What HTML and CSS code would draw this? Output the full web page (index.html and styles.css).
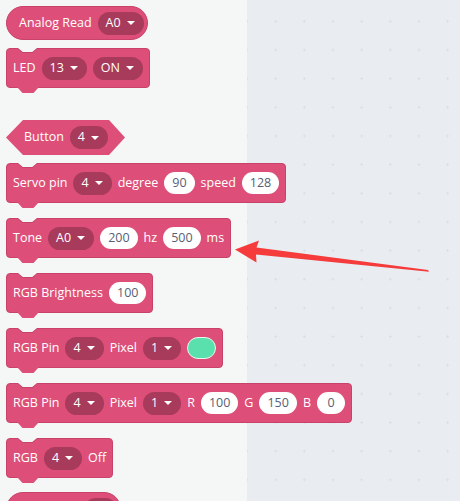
FILE: index.html
```html
<!DOCTYPE html>
<html>
<head>
<meta charset="utf-8">
<link rel="stylesheet" href="styles.css">
</head>
<body>
<div class="app">
  <aside class="flyout">
    <div class="block reporter first">
      <span class="label">Analog Read</span>
      <span class="dd">A0<i class="caret"></i></span>
    </div>
    <div class="block cmd after-reporter">
      <span class="label">LED</span>
      <span class="dd">13<i class="caret"></i></span>
      <span class="dd">ON<i class="caret"></i></span>
    </div>
    <div class="block bool">
      <span class="label">Button</span>
      <span class="dd">4<i class="caret"></i></span>
    </div>
    <div class="block cmd after-bool">
      <span class="label">Servo pin</span>
      <span class="dd">4<i class="caret"></i></span>
      <span class="label">degree</span>
      <span class="num">90</span>
      <span class="label">speed</span>
      <span class="num">128</span>
    </div>
    <div class="block cmd">
      <span class="label">Tone</span>
      <span class="dd">A0<i class="caret"></i></span>
      <span class="num">200</span>
      <span class="label">hz</span>
      <span class="num">500</span>
      <span class="label">ms</span>
    </div>
    <div class="block cmd">
      <span class="label">RGB Brightness</span>
      <span class="num">100</span>
    </div>
    <div class="block cmd">
      <span class="label">RGB Pin</span>
      <span class="dd">4<i class="caret"></i></span>
      <span class="label">Pixel</span>
      <span class="dd">1<i class="caret"></i></span>
      <span class="swatch"></span>
    </div>
    <div class="block cmd">
      <span class="label">RGB Pin</span>
      <span class="dd">4<i class="caret"></i></span>
      <span class="label">Pixel</span>
      <span class="dd">1<i class="caret"></i></span>
      <span class="label">R</span>
      <span class="num">100</span>
      <span class="label">G</span>
      <span class="num">150</span>
      <span class="label">B</span>
      <span class="num">0</span>
    </div>
    <div class="block cmd">
      <span class="label">RGB</span>
      <span class="dd">4<i class="caret"></i></span>
      <span class="label">Off</span>
    </div>
    <div class="block reporter after-cmd">
      <span class="spacer"></span>
      <span class="dd-empty"></span>
    </div>
  </aside>
  <main class="workspace"></main>
  <svg class="arrow" width="460" height="501" viewBox="0 0 460 501">
    <polygon points="235,249.5 259,240.5 256.5,247.5 428,270 429,271.8 256,254.5 256.5,262.5" fill="#f53b3b"/>
  </svg>
</div>
</body>
</html>
```

FILE: styles.css
```css
html, body {
  margin: 0;
  padding: 0;
}
body {
  width: 460px;
  height: 501px;
  overflow: hidden;
  font-family: "Open Sans", "Liberation Sans", Arial, sans-serif;
  font-size: 12.5px;
}
.app {
  position: relative;
  display: flex;
  width: 460px;
  height: 501px;
  overflow: hidden;
}
.flyout {
  width: 247px;
  flex: none;
  background: #f5f6f6;
  display: flex;
  flex-direction: column;
  align-items: flex-start;
  padding-left: 6px;
  box-sizing: border-box;
}
.workspace {
  flex: 1;
  background-color: #e9edf1;
  background-image: radial-gradient(circle, #d9dde3 0.9px, transparent 1.3px);
  background-size: 28.67px 28.67px;
  background-position: -14.3px 7px;
}
.arrow {
  position: absolute;
  left: 0;
  top: 0;
  pointer-events: none;
}
.block {
  position: relative;
  display: flex;
  align-items: center;
  gap: 6px;
  box-sizing: border-box;
  background: #dd4f78;
  color: #fff;
  flex: none;
  white-space: nowrap;
}
.reporter {
  height: 34px;
  border-radius: 17px;
  padding: 0 3px 0 12px;
  border: 1px solid #c8426a;
}
.first {
  margin-top: 6px;
}
.after-cmd {
  margin-top: 14px;
}
.bool {
  height: 35px;
  margin-top: 32px;
  padding: 0 17px 0 18px;
  clip-path: polygon(17px 0, calc(100% - 16px) 0, 100% 50%, calc(100% - 16px) 100%, 17px 100%, 0 50%);
}
.cmd {
  height: 40px;
  border-radius: 4px;
  padding: 0 6px 0 6px;
  border: 1px solid #c8426a;
  margin-top: 15px;
}
.after-reporter,
.after-bool {
  margin-top: 8px;
}
.cmd::before {
  content: "";
  position: absolute;
  left: 10px;
  top: -1px;
  width: 21px;
  height: 5px;
  background: #c8426a;
  clip-path: polygon(0 0, 100% 0, 75% 100%, 25% 100%);
}
.cmd::after {
  content: "";
  position: absolute;
  left: 10px;
  top: 100%;
  width: 22px;
  height: 6px;
  background: #dd4f78;
  clip-path: polygon(0 0, 100% 0, 75% 100%, 25% 100%);
}
.cmd > .label:first-child::before {
  content: "";
  position: absolute;
  left: 11px;
  top: -1px;
  width: 19px;
  height: 4px;
  background: #f5f6f6;
  clip-path: polygon(0 0, 100% 0, 75% 100%, 25% 100%);
}
.label {
  line-height: 1;
}
.spacer {
  width: 59px;
}
.dd-empty {
  width: 33px;
  height: 23px;
  border-radius: 12px;
  background: #a83a5b;
}
.dd {
  display: inline-flex;
  align-items: center;
  gap: 6px;
  height: 23px;
  border-radius: 12px;
  background: #a83a5b;
  padding: 0 9px 0 8px;
  line-height: 1;
}
.caret {
  width: 0;
  height: 0;
  border-left: 4px solid transparent;
  border-right: 4px solid transparent;
  border-top: 4px solid #fff;
}
.num {
  display: inline-flex;
  align-items: center;
  justify-content: center;
  height: 22px;
  min-width: 28px;
  box-sizing: border-box;
  border-radius: 11px;
  background: #fff;
  color: #575e75;
  padding: 0 8px;
  line-height: 1;
}
.swatch {
  width: 29px;
  height: 22px;
  border-radius: 11px;
  background: #5ae0ad;
  box-sizing: border-box;
  border: 1px solid #e8f8f0;
}
```
